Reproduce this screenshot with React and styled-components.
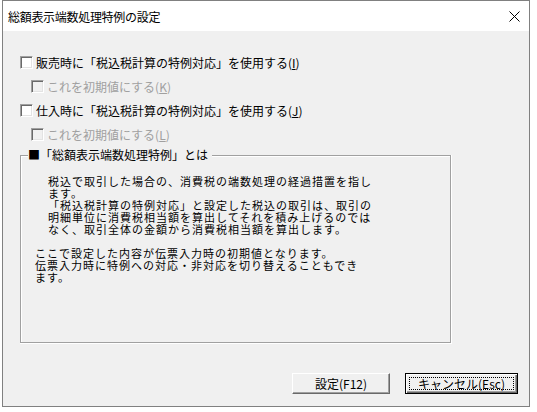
import React from 'react';
import styled, { createGlobalStyle } from 'styled-components';

const Global = createGlobalStyle`
  html, body { margin: 0; padding: 0; background: #ffffff; }
  body {
    font-family: "Noto Sans CJK JP", "Noto Sans", sans-serif;
    font-size: 12px;
    color: #000;
  }
`;

const Page = styled.div`
  width: 537px;
  height: 412px;
  box-sizing: border-box;
  padding-left: 2px;
`;

const Window = styled.div`
  width: 528px;
  height: 407px;
  box-sizing: border-box;
  border: 1px solid #808080;
  background: #f0f0f0;
  display: flex;
  flex-direction: column;
`;

const TitleBar = styled.div`
  height: 30px;
  flex: none;
  background: #ffffff;
  display: flex;
  align-items: center;
  justify-content: space-between;
  padding: 2px 0 0 5px;
  box-sizing: border-box;
`;

const TitleText = styled.span`
  font-size: 12px;
  line-height: 12px;
  letter-spacing: -0.3px;
`;

const CloseButton = styled.div`
  width: 30px;
  height: 30px;
  display: flex;
  align-items: center;
  justify-content: center;
  margin-top: -2px;
`;

const Body = styled.div`
  flex: 1;
  display: flex;
  flex-direction: column;
  padding: 20px 0 0 17px;
`;

const Row = styled.div`
  height: 24px;
  display: flex;
  align-items: center;
  gap: 3px;
  padding-left: ${p => (p.$sub ? 11 : 0)}px;
  color: ${p => (p.$disabled ? '#a0a0a0' : '#000')};
  line-height: 12px;
  white-space: nowrap;
`;

const Box = styled.span`
  width: 13px;
  height: 13px;
  box-sizing: border-box;
  flex: none;
  border-top: 1px solid #a0a0a0;
  border-left: 1px solid #a0a0a0;
  border-right: 1px solid #ffffff;
  border-bottom: 1px solid #ffffff;
  box-shadow: inset 1px 1px 0 #696969, inset -1px -1px 0 #e3e3e3;
  background: ${p => (p.$disabled ? '#f0f0f0' : '#ffffff')};
  margin-top: -1px;
`;

const Mn = styled.span`
  text-decoration: underline;
  text-underline-offset: 1px;
`;

const Group = styled.div`
  margin-top: 2px;
  width: 431px;
  display: flex;
  flex-direction: column;
`;

const GroupHead = styled.div`
  height: 12px;
  display: flex;
  align-items: stretch;
`;

const Seg = styled.div`
  align-self: flex-end;
  height: 6px;
  box-sizing: border-box;
  border-top: 1px solid #a0a0a0;
  ${p =>
    p.$left
      ? 'width: 8px; border-left: 1px solid #a0a0a0; box-shadow: inset 1px 1px 0 #fff;'
      : 'flex: 1; border-right: 1px solid #a0a0a0; box-shadow: inset 0 1px 0 #fff, 1px 0 0 #fff; margin-left: 4px;'}
`;

const Legend = styled.span`
  line-height: 12px;
  white-space: nowrap;
`;

const GroupBody = styled.div`
  height: 182px;
  box-sizing: border-box;
  border-left: 1px solid #a0a0a0;
  border-right: 1px solid #a0a0a0;
  border-bottom: 1px solid #a0a0a0;
  box-shadow: inset 1px 0 0 #fff, 1px 0 0 #fff, 0 1px 0 #fff, 1px 1px 0 #fff;
  padding: 14px 0 0 14px;
  display: flex;
  flex-direction: column;
  gap: 12px;
`;

const Para = styled.p`
  margin: 0;
  padding-left: ${p => p.$indent || 0}px;
  font-size: 11px;
  letter-spacing: 1px;
  line-height: 12px;
  white-space: nowrap;
`;

const Buttons = styled.div`
  margin-top: 30px;
  display: flex;
  justify-content: flex-end;
  gap: 15px;
  padding-right: 11px;
`;

const Button = styled.div`
  width: ${p => p.$w}px;
  height: 21px;
  box-sizing: border-box;
  background: #f0f0f0;
  display: flex;
  align-items: center;
  justify-content: center;
  line-height: 12px;
  ${p =>
    p.$default
      ? 'border: 1px solid #000; box-shadow: inset 1px 1px 0 #fff, inset -1px -1px 0 #696969, inset -2px -2px 0 #a0a0a0;'
      : 'border-top: 1px solid #fff; border-left: 1px solid #fff; border-right: 1px solid #696969; border-bottom: 1px solid #696969; box-shadow: inset -1px -1px 0 #a0a0a0;'}
  padding: ${p => (p.$default ? 3 : 0)}px;
`;

const Focus = styled.div`
  flex: 1;
  align-self: stretch;
  border: 1px dotted #000;
  display: flex;
  align-items: center;
  justify-content: center;
`;

export default function App() {
  return (
    <Page>
      <Global />
      <Window>
        <TitleBar>
          <TitleText>総額表示端数処理特例の設定</TitleText>
          <CloseButton>
            <svg width="11" height="11" viewBox="0 0 11 11">
              <path d="M0.5 0.5 L10.5 10.5 M10.5 0.5 L0.5 10.5" stroke="#000" strokeWidth="1" fill="none" />
            </svg>
          </CloseButton>
        </TitleBar>
        <Body>
          <Row>
            <Box />
            <span>販売時に「税込税計算の特例対応」を使用する(<Mn>I</Mn>)</span>
          </Row>
          <Row $sub $disabled>
            <Box $disabled />
            <span>これを初期値にする(<Mn>K</Mn>)</span>
          </Row>
          <Row>
            <Box />
            <span>仕入時に「税込税計算の特例対応」を使用する(<Mn>J</Mn>)</span>
          </Row>
          <Row $sub $disabled>
            <Box $disabled />
            <span>これを初期値にする(<Mn>L</Mn>)</span>
          </Row>
          <Group>
            <GroupHead>
              <Seg $left />
              <Legend>■「総額表示端数処理特例」とは</Legend>
              <Seg />
            </GroupHead>
            <GroupBody>
              <Para $indent={13}>
                税込で取引した場合の、消費税の端数処理の経過措置を指し<br />
                ます。<br />
                「税込税計算の特例対応」と設定した税込の取引は、取引の<br />
                明細単位に消費税相当額を算出してそれを積み上げるのでは<br />
                なく、取引全体の金額から消費税相当額を算出します。
              </Para>
              <Para>
                ここで設定した内容が伝票入力時の初期値となります。<br />
                伝票入力時に特例への対応・非対応を切り替えることもでき<br />
                ます。
              </Para>
            </GroupBody>
          </Group>
          <Buttons>
            <Button $w={98}>設定(F12)</Button>
            <Button $w={113} $default>
              <Focus>キャンセル(Esc)</Focus>
            </Button>
          </Buttons>
        </Body>
      </Window>
    </Page>
  );
}
